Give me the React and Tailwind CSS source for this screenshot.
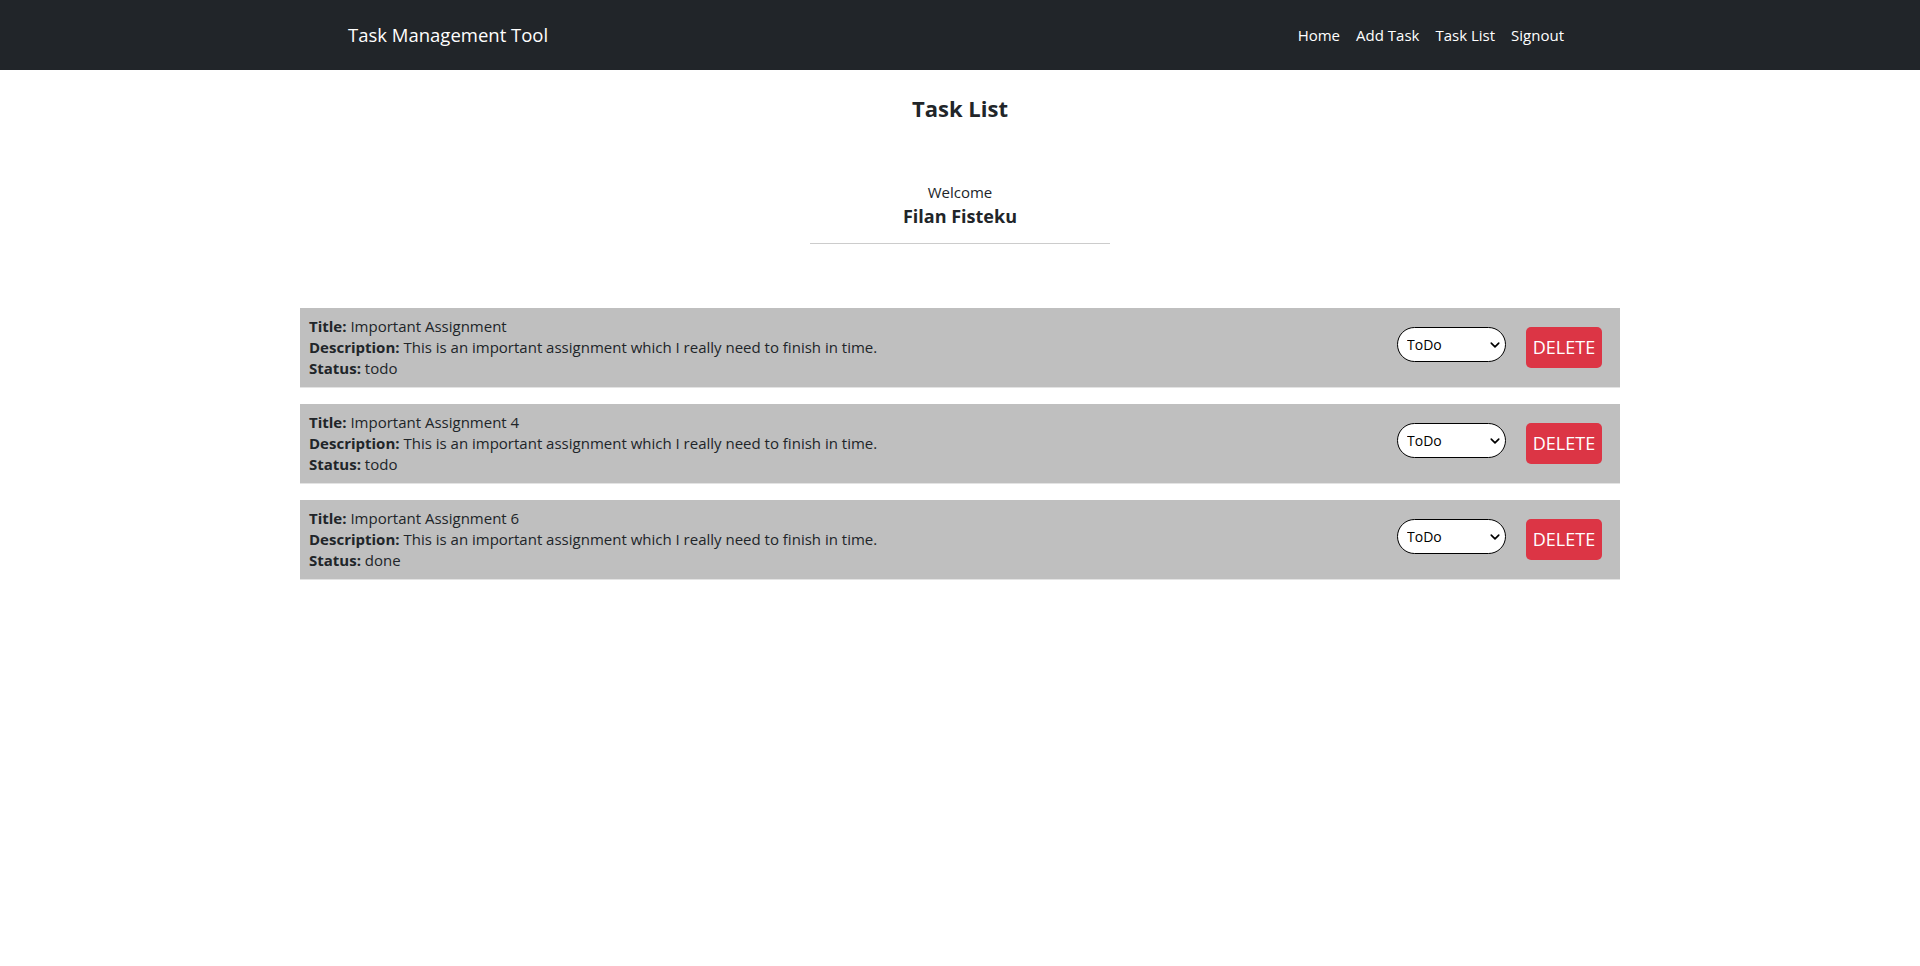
import React from "react";

const tasks = [
  { title: "Important Assignment", status: "todo" },
  { title: "Important Assignment 4", status: "todo" },
  { title: "Important Assignment 6", status: "done" },
];

const desc = "This is an important assignment which I really need to finish in time.";

function Chevron() {
  return (
    <svg className="pointer-events-none absolute right-[6px] top-1/2 -translate-y-1/2" width="10" height="10" viewBox="0 0 16 16">
      <path d="M2 5l6 6 6-6" fill="none" stroke="#000" strokeWidth="2.6" strokeLinecap="round" strokeLinejoin="round" />
    </svg>
  );
}

export default function App() {
  return (
    <div className="min-h-[966px] bg-white text-[#212529]" style={{ fontFamily: '"Open Sans", "Noto Sans", sans-serif' }}>
      <nav className="h-[70px] bg-[#212529]">
        <div className="mx-auto flex h-full w-[1224px] items-center justify-between">
          <span className="text-[18.5px] leading-[30px] text-white">Task Management Tool</span>
          <div className="flex text-[15px] leading-[24px] text-white">
            <a className="px-2">Home</a>
            <a className="px-2">Add Task</a>
            <a className="px-2">Task List</a>
            <a className="px-2">Signout</a>
          </div>
        </div>
      </nav>

      <h2 className="mt-[24px] text-center text-[22px] font-bold leading-[29px]">Task List</h2>

      <div className="mt-[57px] flex flex-col items-center">
        <div className="text-[15px] leading-[24px]">Welcome</div>
        <div className="text-[18px] font-bold leading-[24px]">Filan Fisteku</div>
        <div className="mt-[15px] h-px w-[300px] bg-[#cccccc]" />
      </div>

      <div className="mx-auto mt-[64px] flex w-[1320px] flex-col gap-[17px]">
        {tasks.map((t, i) => (
          <div key={i} className="flex items-center justify-between bg-[#bfbfbf] px-[9px] py-[8px] text-[15px] leading-[21px] shadow-[0_1px_0_#e3e3e3]">
            <div>
              <div><b>Title:</b> {t.title}</div>
              <div><b>Description:</b> {desc}</div>
              <div><b>Status:</b> {t.status}</div>
            </div>
            <div className="flex items-center gap-[20px] pr-[9px]">
              <div className="relative mb-[6px]">
                <select className="h-[35px] w-[109px] appearance-none rounded-full border border-black bg-white pl-[9px] text-[14px] text-black outline-none">
                  <option>ToDo</option>
                  <option>Done</option>
                </select>
                <Chevron />
              </div>
              <button className="h-[41px] w-[76px] rounded-[5px] bg-[#dc3545] text-[18px] text-white">DELETE</button>
            </div>
          </div>
        ))}
      </div>
    </div>
  );
}
